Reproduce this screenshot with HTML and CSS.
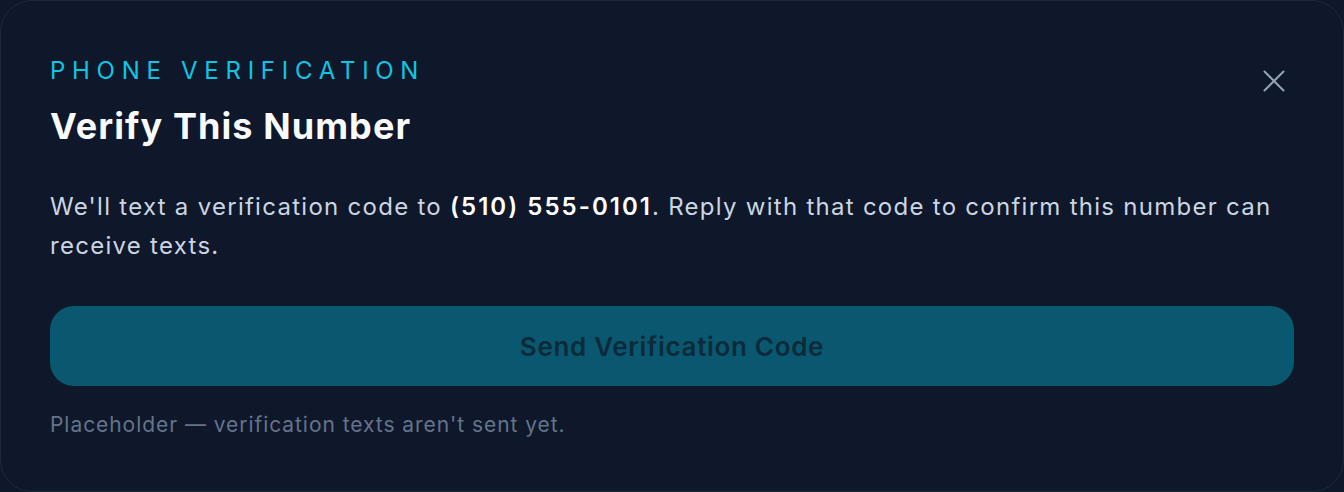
FILE: index.html
```html
<!DOCTYPE html>
<html lang="en">
<head>
<meta charset="utf-8">
<title>Verify This Number</title>
<link rel="stylesheet" href="styles.css">
</head>
<body>
<div class="card">
  <div class="header">
    <div class="heading">
      <div class="eyebrow">Phone Verification</div>
      <h1 class="title">Verify This Number</h1>
    </div>
    <button class="close" aria-label="Close">
      <svg width="22" height="22" viewBox="0 0 22 22" fill="none" stroke="currentColor" stroke-width="2" stroke-linecap="round"><path d="M1.5 1.5 L20.5 20.5 M20.5 1.5 L1.5 20.5"/></svg>
    </button>
  </div>
  <p class="body">We'll text a verification code to <strong>(510) 555-0101</strong>. Reply with that code to confirm this number can receive texts.</p>
  <button class="send" disabled>Send Verification Code</button>
  <p class="note">Placeholder — verification texts aren't sent yet.</p>
</div>
</body>
</html>
```

FILE: styles.css
```css
* { box-sizing: border-box; }
html, body {
  margin: 0;
  padding: 0;
  background: #0f172a;
}
body {
  font-family: Inter, "Noto Sans", sans-serif;
  width: 1344px;
  height: 492px;
}
.card {
  width: 1344px;
  height: 492px;
  background: #0f172a;
  border: 1px solid #1e293b;
  border-radius: 32px;
  padding: 54px 49px 0 49px;
  display: flex;
  flex-direction: column;
}
.header {
  display: flex;
  justify-content: space-between;
  align-items: flex-start;
}
.heading {
  display: flex;
  flex-direction: column;
}
.eyebrow {
  font-size: 24px;
  line-height: 32px;
  letter-spacing: 0.28em;
  text-transform: uppercase;
  color: #0ec6e4;
  font-weight: 400;
}
.title {
  margin: 17px 0 0 0;
  font-size: 36px;
  line-height: 44px;
  font-weight: 700;
  color: #f8fafc;
  letter-spacing: 0.03em;
}
.close {
  width: 40px;
  height: 40px;
  margin-top: 6px;
  padding: 0;
  border: 0;
  background: transparent;
  color: #94a3b8;
  display: flex;
  align-items: center;
  justify-content: center;
}
.body {
  margin: 39px 0 0 0;
  font-size: 24px;
  line-height: 39px;
  color: #cbd5e1;
  letter-spacing: 0.053em;
}
.body strong {
  color: #ffffff;
  font-weight: 600;
  letter-spacing: 0.085em;
}
.send {
  margin-top: 41px;
  height: 80px;
  width: 100%;
  border: 0;
  border-radius: 24px;
  background: #0a5870;
  color: #0b2a3a;
  font-family: Inter, "Noto Sans", sans-serif;
  font-size: 26px;
  font-weight: 600;
  letter-spacing: 0.026em;
}
.note {
  margin: 23px 0 0 0;
  font-size: 21px;
  line-height: 32px;
  color: #64748b;
  letter-spacing: 0.045em;
}
```
